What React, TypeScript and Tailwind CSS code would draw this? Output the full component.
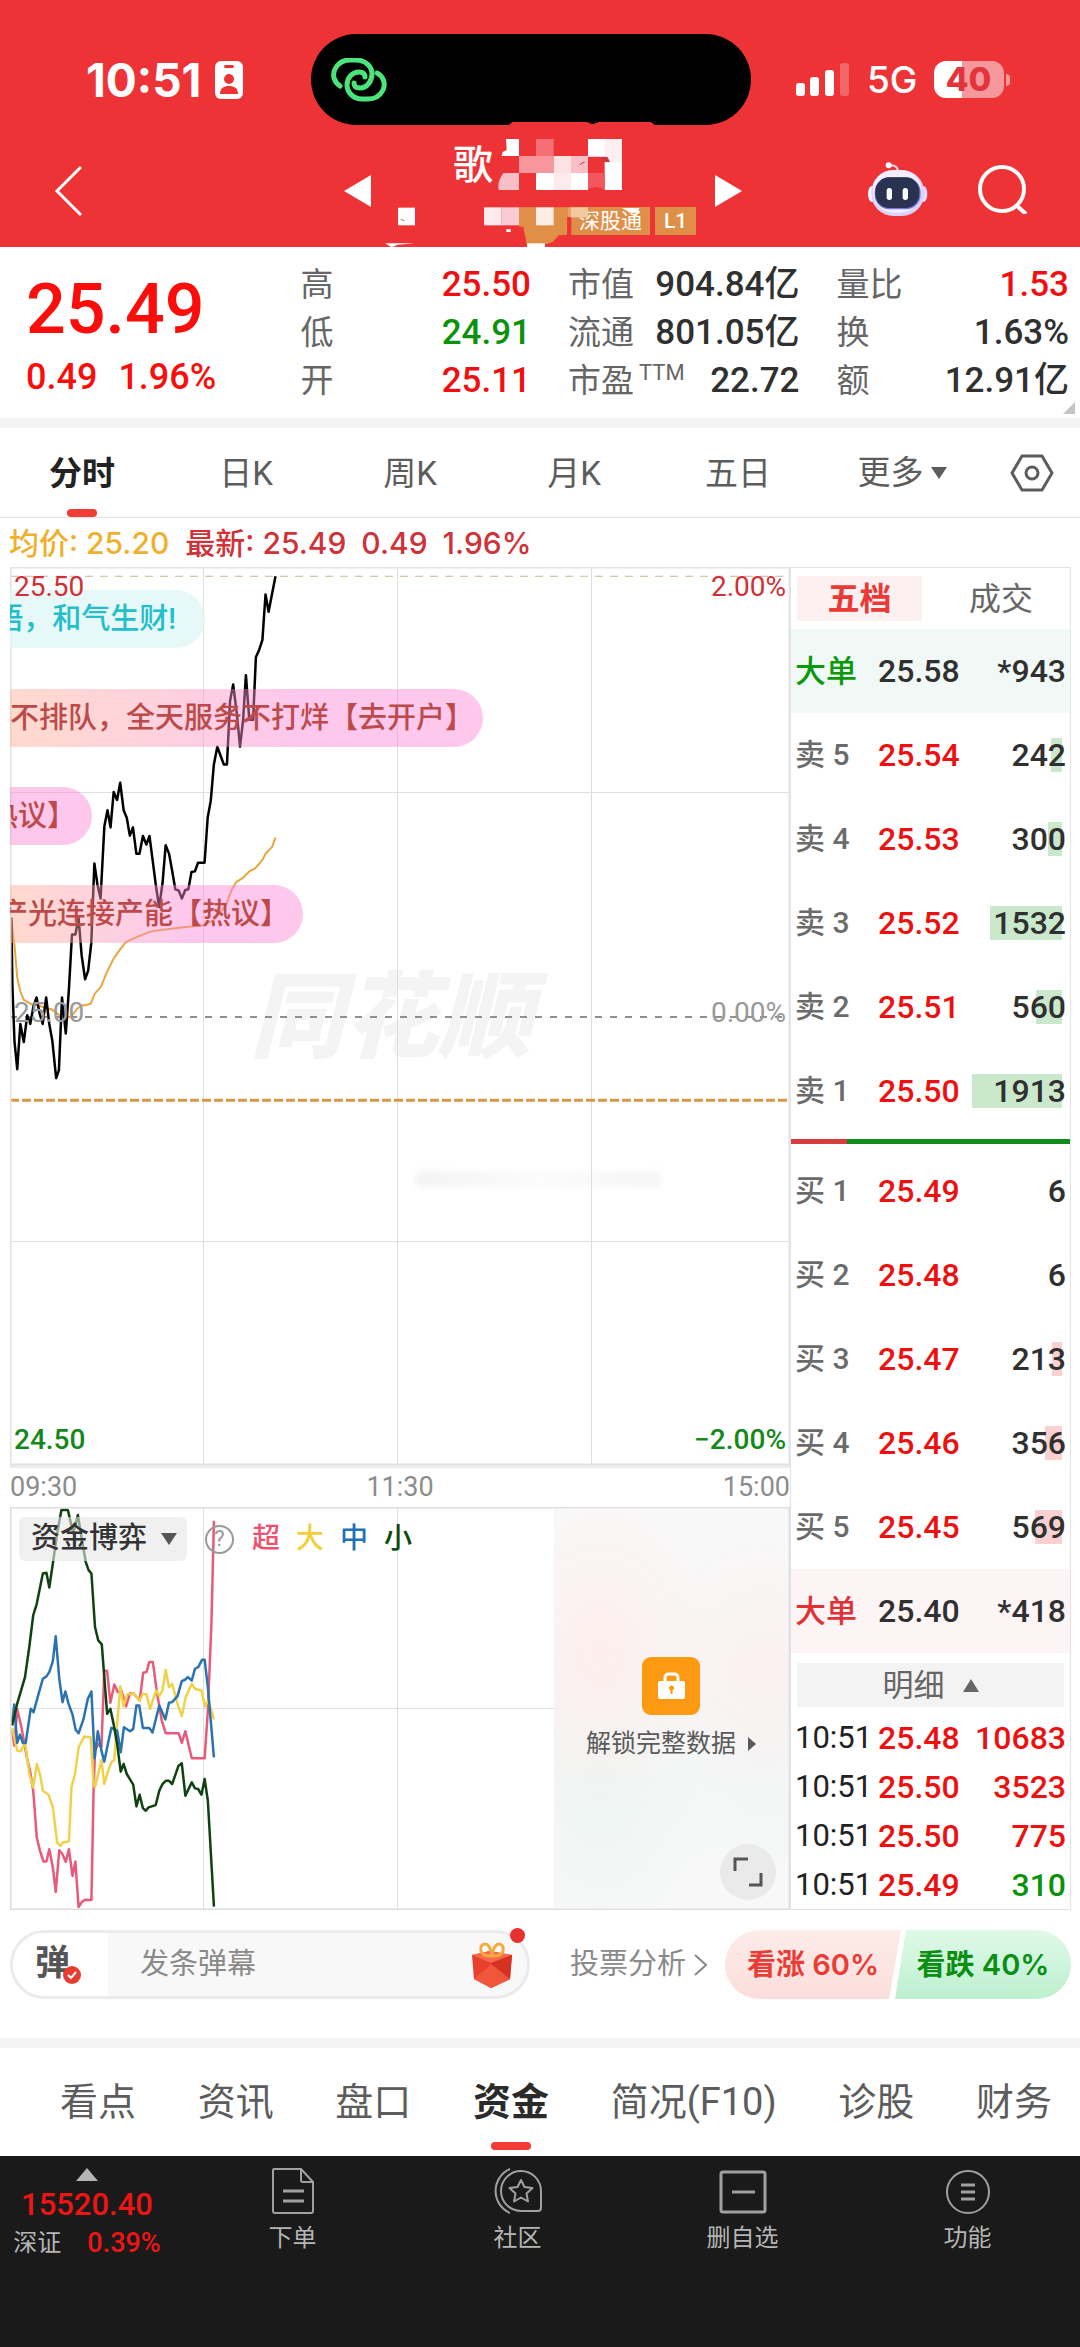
import { useState } from 'react';
import clsx from 'clsx';

interface Stat {
  label: string;
  note?: string;
  value: string;
  color?: string;
}

interface Level {
  label: string;
  price: string;
  volume: number;
}

const RED = 'text-[#ee1010]';
const GREEN = 'text-[#0a930a]';

const STATS: Stat[][] = [
  [
    { label: '高', value: '25.50', color: RED },
    { label: '低', value: '24.91', color: GREEN },
    { label: '开', value: '25.11', color: RED }
  ],
  [
    { label: '市值', value: '904.84亿' },
    { label: '流通', value: '801.05亿' },
    { label: '市盈', note: 'TTM', value: '22.72' }
  ],
  [
    { label: '量比', value: '1.53', color: RED },
    { label: '换', value: '1.63%' },
    { label: '额', value: '12.91亿' }
  ]
];

const PERIODS = ['分时', '日K', '周K', '月K', '五日'];

const ASKS: Level[] = [
  { label: '卖 5', price: '25.54', volume: 242 },
  { label: '卖 4', price: '25.53', volume: 300 },
  { label: '卖 3', price: '25.52', volume: 1532 },
  { label: '卖 2', price: '25.51', volume: 560 },
  { label: '卖 1', price: '25.50', volume: 1913 }
];

const BIDS: Level[] = [
  { label: '买 1', price: '25.49', volume: 6 },
  { label: '买 2', price: '25.48', volume: 6 },
  { label: '买 3', price: '25.47', volume: 213 },
  { label: '买 4', price: '25.46', volume: 356 },
  { label: '买 5', price: '25.45', volume: 569 }
];

const TICKS = [
  { time: '10:51', price: '25.48', volume: '10683', color: RED },
  { time: '10:51', price: '25.50', volume: '3523', color: RED },
  { time: '10:51', price: '25.50', volume: '775', color: RED },
  { time: '10:51', price: '25.49', volume: '310', color: GREEN }
];

const SECTIONS = ['看点', '资讯', '盘口', '资金', '简况(F10)', '诊股', '财务'];

const PRICE_LINE =
  '33,1040 36,1240 42,1400 50,1482 59,1350 69,1403 79,1325 88,1350 97,1300 106,1273 115,1320 124,1350 134,1273 143,1350 152,1400 163,1508 171,1485 180,1273 191,1378 200,1250 209,1090 219,1090 228,1040 237,1150 247,1220 256,1195 265,1115 274,883 283,945 292,985 303,775 312,728 321,778 330,675 340,698 349,648 359,728 368,750 377,802 386,778 396,855 405,855 415,803 425,828 434,803 444,880 453,950 462,1010 472,940 481,830 491,855 500,905 509,958 519,962 528,985 538,960 547,958 556,908 566,906 575,881 594,881 603,750 612,700 621,595 631,543 640,568 650,595 659,595 668,410 677,362 687,440 697,543 706,465 714,335 724,465 735,465 743,283 753,260 762,232 771,100 780,150 790,98 800,47';

const AVERAGE_LINE =
  '33,1050 42,1120 50,1215 59,1255 69,1280 90,1292 115,1298 150,1308 180,1330 205,1330 225,1305 237,1297 263,1292 275,1262 293,1242 310,1200 330,1160 345,1138 365,1112 400,1096 440,1080 520,1070 590,1063 620,1048 640,1025 658,1000 670,965 685,938 705,925 725,905 740,898 762,873 771,855 790,835 800,808';

const FUND_LINES = [
  {
    name: '超',
    stroke: '#e8597a',
    text: 'text-[#f0506e]',
    points:
      '34,720 40,765 48,655 60,710 75,800 84,840 93,900 103,1040 112,1080 122,1112 130,1112 138,1075 148,1130 156,1203 166,1078 175,1090 184,1113 193,1075 203,1155 211,1112 220,1248 230,1232 240,1226 256,1227 262,900 266,780 275,760 284,770 292,540 300,542 309,637 320,582 330,605 340,600 353,648 364,608 373,608 391,630 401,547 410,545 418,515 428,515 440,610 453,690 464,728 500,728 509,757 519,722 537,803 573,803 582,660 592,400 599,92'
  },
  {
    name: '大',
    stroke: '#f0d24a',
    text: 'text-[#f2cf3c]',
    points:
      '34,712 48,780 58,782 70,755 82,850 93,890 103,820 112,850 120,900 136,912 148,950 160,1055 170,1065 175,1055 193,1052 200,890 210,850 220,770 236,738 254,740 262,880 266,890 284,808 292,880 303,840 312,815 320,808 328,700 337,587 346,648 356,612 373,608 391,630 400,610 410,612 420,655 437,600 446,617 455,600 464,538 473,590 482,580 497,640 509,677 520,620 537,580 546,595 564,600 574,648 582,630 592,660 599,687'
  },
  {
    name: '中',
    stroke: '#2a72b0',
    text: 'text-[#1f72ba]',
    points:
      '34,695 40,642 48,757 56,732 64,757 72,757 86,655 94,665 108,610 120,565 130,558 138,545 148,512 156,438 166,565 175,635 183,603 192,640 203,672 212,718 220,728 234,685 246,625 256,603 265,803 274,722 284,780 292,813 303,755 312,712 328,720 338,785 347,710 364,722 373,715 382,645 390,645 400,712 418,712 427,726 446,645 463,687 473,637 482,635 497,617 509,572 518,568 526,560 537,570 546,535 555,530 566,508 573,508 582,590 599,800'
  },
  {
    name: '小',
    stroke: '#0f4210',
    text: 'text-[#0c4a0e]',
    points:
      '34,705 48,640 70,560 82,470 93,375 103,340 120,250 130,248 138,292 148,220 160,130 172,60 190,60 205,130 218,75 228,140 240,215 248,240 256,250 266,410 275,450 285,462 292,560 300,670 309,655 318,700 328,760 338,843 346,820 355,850 373,882 382,947 391,912 400,952 408,960 416,950 436,943 446,900 455,880 465,870 473,870 482,880 500,825 509,818 519,915 537,875 546,893 555,895 564,912 573,865 582,930 599,1247'
  }
];

function StatusBar() {
  return (
    <div className="grid grid-cols-[1fr_440px_329px] items-center pt-[34px] font-['Inter','Noto_Sans_CJK_SC',sans-serif]">
      <div className="flex items-center gap-[14px] pl-[86px]">
        <span className="text-[46px] leading-none font-bold">10:51</span>
        <svg viewBox="0 0 28 38" className="h-[38px] w-[28px]" fill="none">
          <rect width="28" height="38" rx="6" fill="#fff" />
          <rect x="9" y="4" width="10" height="3" rx="1.5" fill="#ee3337" />
          <circle cx="14" cy="18" r="5" fill="#ee3337" />
          <path d="M5 33c0-6 4-8 9-8s9 2 9 8z" fill="#ee3337" />
        </svg>
      </div>
      <div className="flex h-[91px] items-center rounded-full bg-black pl-[20px]">
        {/* two interlocked links */}
        <svg viewBox="0 0 56 44" className="h-[44px] w-[56px]" fill="none" stroke="#4be37b" strokeWidth="5" strokeLinecap="round">
          <path d="M9 28C3 24 1 17 4 11 7 5 13 2 19 2h6c10 0 16 7 16 14s-5 14-12 14c-4 0-6-2-6-5" />
          <path d="M46 15c6 3 9 10 6 17-3 6-8 9-15 9h-6c-9 0-15-7-15-14s5-13 12-13c4 0 6 2 6 5" />
        </svg>
      </div>
      <div className="flex items-center pl-[45px]">
        <svg viewBox="0 0 54 34" className="h-[34px] w-[54px]" fill="#fff">
          <rect y="20" width="9" height="13" rx="3" />
          <rect x="14" y="14" width="9" height="19" rx="3" />
          <rect x="29" y="7" width="9" height="26" rx="3" />
          <rect x="44" width="9" height="33" rx="3" fillOpacity=".25" />
        </svg>
        <span className="ml-[17px] text-[37px] leading-none font-medium">5G</span>
        <div className="ml-[16px] flex h-[37px] w-[70px] items-center justify-center rounded-[12px] bg-linear-to-r from-white from-40% to-[#f5979b] to-40% text-[33px] leading-none font-extrabold text-[#e2343a]">
          40
        </div>
        <div className="ml-[2px] h-[12px] w-[4px] rounded-r-full bg-[#f5979b]" />
      </div>
    </div>
  );
}

// Blocks that hide most of the stock name and code
function NameMask() {
  return (
    <svg viewBox="0 60 1080 381" className="absolute -top-[5px] -left-px h-[127px] w-[360px]">
      <path d="M415 76 428 66H650l18 7 18-7H842l14 10z" fill="#ee3337" />
      <path d="M408 117h39v51h-52l3-12 12-6z" fill="#fff" />
      <rect x="498" y="117" width="53" height="51" fill="#f56f74" />
      <path d="M654 117h102v153h-52v-84l-14-16h-36z" fill="#fff" />
      <rect x="704" y="117" width="52" height="70" fill="#fdeef0" />
      <rect x="447" y="168" width="104" height="51" fill="#f7979d" />
      <rect x="551" y="168" width="52" height="51" fill="#fde2e5" />
      <rect x="603" y="168" width="51" height="51" fill="#fabfc4" />
      <path d="M630 195q4-8 14-8" stroke="#c9383d" strokeWidth="3" fill="none" />
      <path d="M690 170h22l8 16h-22z" fill="#c9383d" />
      <path d="M400 219h47v51h-60q-8-20 13-51z" fill="#fabfc6" />
      <rect x="498" y="219" width="156" height="51" fill="#fff" />
      <rect x="551" y="219" width="52" height="51" fill="#fdeaed" />
      <path d="M654 219h50v51l-26-10-24 8z" fill="#f3565d" />
      <rect x="84" y="323" width="51" height="53" fill="#fff" />
      <path d="M92 358l12 4" stroke="#555" strokeWidth="2" />
      <rect x="342" y="322" width="52" height="54" fill="#fdeaee" />
      <rect x="394" y="322" width="53" height="54" fill="#fbcbd3" />
      <path d="M447 322h145v82l-26 2-18 20-18 6h-60l-10-52h-13z" fill="#e08f48" />
      <rect x="498" y="322" width="53" height="54" fill="#fdece3" />
      <path d="M592 350h12v54h-12z" fill="#ee3337" />
      <path d="M592 322h62v30h-50l-12-2z" fill="#e6a468" />
      <path d="M603 322h51v30h-51z" fill="#f5c9a0" />
      <path d="M756 324h52l-4 14h-24z" fill="#fff" />
      <path d="M408 388h14v8h-12z" fill="#fff" />
      <path d="M46 430h88l-50 4-20 8z" fill="#fff" />
      <rect x="471" y="430" width="54" height="11" fill="#fff" />
    </svg>
  );
}

function RobotIcon() {
  return (
    <svg viewBox="0 0 180 165" className="h-[55px] w-[60px]">
      <path d="M62 10q30-4 28 26" stroke="#fbe4ee" strokeWidth="6" fill="none" />
      <circle cx="62" cy="10" r="9" fill="#fff" />
      <ellipse cx="12" cy="96" rx="12" ry="24" fill="#f6f0ff" />
      <ellipse cx="166" cy="96" rx="12" ry="24" fill="#e6dcff" />
      <rect x="10" y="24" width="158" height="138" rx="66" fill="#d9d2fb" />
      <rect x="14" y="24" width="146" height="128" rx="62" fill="#f2eeff" />
      <rect x="20" y="46" width="138" height="96" rx="44" fill="#7478d6" />
      <rect x="22" y="46" width="132" height="92" rx="42" fill="#2a3251" />
      <rect x="56" y="78" width="16" height="36" rx="8" fill="#fff" />
      <rect x="104" y="78" width="16" height="36" rx="8" fill="#fff" />
    </svg>
  );
}

function Header() {
  return (
    <header className="bg-[#ee3337] text-white">
      <StatusBar />
      <div className="grid h-[122px] grid-cols-[1fr_398px_338px]">
        <button aria-label="返回" className="flex items-center justify-start pt-[10px] pl-[54px]">
          <svg viewBox="0 0 28 50" className="h-[50px] w-[28px]" fill="none" stroke="#fff" strokeWidth="3">
            <path d="M27 1 3 25 27 49" />
          </svg>
        </button>
        <div className="flex">
          <button aria-label="上一只" className="pt-[9px]">
            <svg viewBox="0 0 27 32" className="h-[32px] w-[27px]" fill="#fff">
              <path d="M27 0v32L0 16z" />
            </svg>
          </button>
          <div className="relative flex-1 pt-[11px]">
            <h1 className="pl-[82px] text-[40px] leading-[60px] font-medium">歌</h1>
            <div className="mt-[11px] flex gap-[5px] pl-[200px] text-[21px] leading-[28px]">
              <span className="bg-[#e08f48] px-[8px]">深股通</span>
              <span className="bg-[#e08f48] px-[9px] font-medium">L1</span>
            </div>
            <NameMask />
          </div>
          <button aria-label="下一只" className="pt-[9px]">
            <svg viewBox="0 0 27 32" className="h-[32px] w-[27px]" fill="#fff">
              <path d="M0 0v32l27-16z" />
            </svg>
          </button>
        </div>
        <div className="flex items-center justify-end gap-[50px] pt-[6px] pr-[52px]">
          <button aria-label="智能助手">
            <RobotIcon />
          </button>
          <button aria-label="搜索">
            <svg viewBox="0 0 50 50" className="h-[50px] w-[50px]" fill="none" stroke="#fff" strokeWidth="4">
              <circle cx="24" cy="25" r="22" />
              <path d="m38 41 10 9" />
            </svg>
          </button>
        </div>
      </div>
    </header>
  );
}

function Quote() {
  return (
    <section className="relative grid grid-cols-[237fr_230fr_231fr_232fr] gap-[37px] border-b-[10px] border-[#f3f3f3] pt-[14px] pr-[11px] pb-[13px] pl-[26px]">
      <div className="text-[#fa0d0a]">
        <div className="pt-[6px] text-[70px] leading-[84px] font-medium">25.49</div>
        <div className="flex gap-[21px] pt-[2px] text-[36px] leading-[48px] font-medium">
          <span>0.49</span>
          <span>1.96%</span>
        </div>
      </div>
      {STATS.map((group) => (
        <dl key={group[0].label}>
          {group.map(({ label, note, value, color }) => (
            <div key={label} className="flex h-[48px] items-center justify-between whitespace-nowrap">
              <dt className="flex text-[33px] text-[#666]">
                {label}
                {note && <span className="pl-[5px] text-[22px]">{note}</span>}
              </dt>
              <dd className={clsx('text-[35px] font-medium', color ?? 'text-[#303030]')}>{value}</dd>
            </div>
          ))}
        </dl>
      ))}
      <svg viewBox="0 0 12 12" className="absolute right-[5px] bottom-[4px] h-[12px] w-[12px]" fill="#c4c4c4">
        <path d="M12 0v12H0z" />
      </svg>
    </section>
  );
}

function PeriodTabs() {
  const [active, setActive] = useState('分时');

  return (
    <nav className="grid h-[90px] grid-cols-[repeat(6,164fr)_96fr] border-b border-[#e4e5e7] text-[33px] text-[#5c5c5c]">
      {PERIODS.map((period) => (
        <button
          key={period}
          onClick={() => setActive(period)}
          className={clsx('flex flex-col items-center justify-between', period === active && 'font-bold text-[#222]')}
        >
          <span className="pt-[21px]">{period}</span>
          {period === active && <span className="h-[8px] w-[30px] rounded-full bg-[#f23c35]" />}
        </button>
      ))}
      <button aria-haspopup="menu" className="flex items-center justify-center gap-[7px]">
        更多
        <svg viewBox="0 0 16 12" className="h-[12px] w-[16px]" fill="#5c5c5c">
          <path d="M0 0h16L8 12z" />
        </svg>
      </button>
      <button aria-label="图表设置" className="flex items-center justify-center">
        <svg viewBox="0 0 44 40" className="h-[40px] w-[44px]" fill="none" stroke="#5c5c5c" strokeWidth="3">
          <path d="M12 3h20l10 17-10 17H12L2 20z" strokeLinejoin="round" />
          <circle cx="22" cy="20" r="6" />
        </svg>
      </button>
    </nav>
  );
}

function PriceChart() {
  return (
    <div className="relative h-[901px] overflow-hidden border-b-[3px] border-[#ebebed] text-[28px] leading-none">
      <div className="absolute top-[404px] left-[240px] text-[94px] font-black text-[#f4f4f4] italic">同花顺</div>
      <div className="absolute top-[604px] left-[406px] h-[16px] w-[244px] bg-linear-to-r from-[#f3f3f3] via-[#fcfcfc] to-[#f5f5f5] blur-[3px]" />
      <svg
        viewBox="29 20 2265 2614"
        preserveAspectRatio="none"
        className="absolute inset-0 h-full w-full [&_*]:[vector-effect:non-scaling-stroke]"
        fill="none"
      >
        <path
          d="M590 20V2634M1154 20V2634M1719 20V2634M29 675H2294M29 1984H2294"
          stroke="#dedee2"
          strokeWidth="1"
          shapeRendering="crispEdges"
        />
        <path d="M29 47H2294" stroke="#c9b78a" strokeWidth="1" strokeDasharray="8 7" />
        <path d="M29 1330H2294" stroke="#8f8f8f" strokeWidth="2" strokeDasharray="7 8" />
        <path d="M29 1572H2294" stroke="#d99748" strokeWidth="3" strokeDasharray="9 3" />
        <polyline points={AVERAGE_LINE} stroke="#e8a63c" strokeWidth="2" />
        <polyline points={PRICE_LINE} stroke="#000" strokeWidth="2.5" strokeLinejoin="round" />
        <path d="M29 20H2294V2634H29z" stroke="#e3e3e6" strokeWidth="3" />
      </svg>

      <div className="absolute top-[23px] left-0 flex h-[58px] w-[195px] items-center justify-end rounded-r-full bg-[#dff6f6]/75 pr-[29px] text-[29px] font-medium whitespace-nowrap text-[#22bfca]">
        语，和气生财!
      </div>
      <div className="absolute top-[122px] left-0 flex h-[58px] w-[473px] items-center rounded-r-full bg-linear-to-r from-[#ffad90]/45 to-[#fb85d5]/45 to-60% text-[29px] font-medium whitespace-nowrap text-[#bd4a4a]">
        不排队，全天服务不打烊【去开户】
      </div>
      <div className="absolute top-[220px] left-0 flex h-[58px] w-[82px] items-center justify-end overflow-hidden rounded-r-full bg-[#fb85d5]/45 pr-[16px] text-[29px] font-medium whitespace-nowrap text-[#bd4a4a]">
        热议】
      </div>
      <div className="absolute top-[318px] left-0 flex h-[58px] w-[293px] items-center justify-end overflow-hidden rounded-r-full bg-linear-to-r from-[#ffad90]/45 to-[#fb85d5]/45 to-60% pr-[14px] text-[29px] font-medium whitespace-nowrap text-[#bd4a4a]">
        产光连接产能【热议】
      </div>

      <span className="absolute top-[6px] left-[4px] text-[#d03038]">25.50</span>
      <span className="absolute top-[6px] right-[4px] text-[#d03038]">2.00%</span>
      <span className="absolute top-[432px] left-[4px] text-[#999]">25.00</span>
      <span className="absolute top-[432px] right-[4px] text-[#999]">0.00%</span>
      <span className="absolute bottom-[11px] left-[4px] font-medium text-[#14881a]">24.50</span>
      <span className="absolute right-[4px] bottom-[11px] font-medium text-[#14881a]">−2.00%</span>
    </div>
  );
}

function FundChart() {
  return (
    <div className="relative flex-1">
      <svg
        viewBox="28 51 2184 1206"
        preserveAspectRatio="none"
        className="absolute inset-0 h-full w-full [&_*]:[vector-effect:non-scaling-stroke]"
        fill="none"
      >
        <path d="M569 51V1257M1112 51V1257M28 654H2212" stroke="#dedee2" strokeWidth="1" shapeRendering="crispEdges" />
        {FUND_LINES.map((line) => (
          <polyline key={line.name} points={line.points} stroke={line.stroke} strokeWidth="2.5" strokeLinejoin="round" />
        ))}
        <path d="M28 51H2212V1257H28z" stroke="#dedee2" strokeWidth="3" />
      </svg>

      <div className="relative flex items-center pt-[10px] pl-[9px] text-[29px]">
        <label className="relative flex items-center">
          <span className="sr-only">指标</span>
          <select className="h-[44px] w-[168px] appearance-none rounded-[6px] bg-[#e6e6e6]/60 pl-[12px] font-medium text-[#333]">
            <option>资金博弈</option>
          </select>
          <svg viewBox="0 0 16 12" className="pointer-events-none absolute right-[10px] h-[12px] w-[16px]" fill="#555">
            <path d="M0 0h16L8 12z" />
          </svg>
        </label>
        <button
          aria-label="说明"
          className="ml-[18px] flex h-[29px] w-[29px] items-center justify-center rounded-full border-2 border-[#999] text-[22px] leading-none text-[#999]"
        >
          ?
        </button>
        <div className="flex gap-[16px] pl-[18px] text-[28px] leading-[44px] font-medium">
          {FUND_LINES.map((line) => (
            <span key={line.name} className={line.text}>
              {line.name}
            </span>
          ))}
        </div>
      </div>

      <div className="absolute inset-y-[2px] right-[2px] flex w-[234px] flex-col items-center bg-[#f8f8f8] bg-[radial-gradient(ellipse_at_20%_36%,#fdeeed_0%,transparent_45%),radial-gradient(ellipse_at_90%_40%,#fbf0f0_0%,transparent_40%),radial-gradient(ellipse_at_20%_68%,#edf5f3_0%,transparent_45%),radial-gradient(ellipse_at_90%_62%,#f1f6f5_0%,transparent_40%)] pt-[148px]">
        <svg viewBox="0 0 58 58" className="h-[58px] w-[58px]">
          <rect width="58" height="58" rx="9" fill="#fd9a12" />
          <path d="M23 25v-4q0-4 4-4h5q4 0 4 4v4" stroke="#fff" strokeWidth="3" fill="none" />
          <rect x="16" y="24" width="27" height="18" rx="2" fill="#fff" />
          <circle cx="29.500" cy="31" r="2.500" fill="#fd9a12" />
          <path d="M28.500 31h2v6h-2z" fill="#fd9a12" />
        </svg>
        <button className="flex items-center gap-[12px] pt-[10px] text-[25px] whitespace-nowrap text-[#5a5a5a]">
          解锁完整数据
          <svg viewBox="0 0 8 14" className="h-[14px] w-[8px]" fill="#5a5a5a">
            <path d="M0 0 8 7 0 14z" />
          </svg>
        </button>
        <button
          aria-label="全屏"
          className="absolute right-[12px] bottom-[8px] flex h-[56px] w-[56px] items-center justify-center rounded-full bg-[#eaeaea]"
        >
          <svg viewBox="0 0 30 30" className="h-[30px] w-[30px]" fill="none" stroke="#555" strokeWidth="3">
            <path d="M2 14V2h13M16 28h12V16" />
          </svg>
        </button>
      </div>
    </div>
  );
}

function LevelTable({ levels, barClass }: { levels: Level[]; barClass: string }) {
  return (
    <table className="w-full table-fixed">
      <tbody>
        {levels.map(({ label, price, volume }) => (
          <tr key={label} className="h-[84px]">
            <th className="w-[87px] pl-[4px] text-left text-[30px] font-medium whitespace-nowrap text-[#6b6b6b]">{label}</th>
            <td className="w-[90px] text-[#ee1010]">{price}</td>
            <td className="relative pr-[4px] text-right text-[#303030]">
              <span
                className={clsx('absolute top-[25px] right-[8px] h-[34px]', barClass)}
                style={{ width: volume < 50 ? 0 : (volume / 1913) * 90 }}
              />
              <span className="relative">{volume}</span>
            </td>
          </tr>
        ))}
      </tbody>
    </table>
  );
}

function BigOrder({ price, volume, tone }: { price: string; volume: string; tone: string }) {
  return (
    <div className={clsx('flex h-[84px] items-center pr-[4px] pl-[4px]', tone)}>
      <span className="w-[83px] text-[31px]">大单</span>
      <span className="text-[#303030]">{price}</span>
      <span className="ml-auto text-[#303030]">*{volume}</span>
    </div>
  );
}

function OrderBook() {
  return (
    <aside className="border border-[#e3e3e6] text-[32px] leading-none font-medium">
      <div className="flex h-[61px] items-center pl-[6px]">
        <button className="h-[45px] w-[125px] bg-[#fdf0f0] font-bold text-[#ea3a36]">五档</button>
        <button className="flex-1 pl-[10px] font-normal text-[#666]">成交</button>
      </div>
      <BigOrder price="25.58" volume="943" tone="bg-[#f1f9f6] text-[#0a990a]" />
      <LevelTable levels={ASKS} barClass="bg-[#c9e8cc]" />
      <div className="flex h-[16px] items-center">
        <div className="h-[5px] w-[20%] bg-[#d63b3e]" />
        <div className="h-[5px] flex-1 bg-[#128c1c]" />
      </div>
      <LevelTable levels={BIDS} barClass="bg-[#fbd0d0]" />
      <BigOrder price="25.40" volume="418" tone="bg-[#fdf4f5] text-[#e03236]" />
      <div className="px-[6px] pt-[10px] pb-[6px]">
        <button className="flex h-[44px] w-full items-center justify-center gap-[18px] bg-[#f3f3f4] text-[31px] font-normal text-[#666]">
          明细
          <svg viewBox="0 0 16 13" className="h-[13px] w-[16px]" fill="#666">
            <path d="M0 13h16L8 0z" />
          </svg>
        </button>
      </div>
      <table className="w-full table-fixed">
        <tbody>
          {TICKS.map(({ time, price, volume, color }, i) => (
            <tr key={i} className="h-[49px]">
              <td className="w-[87px] pl-[4px] text-[31px] font-normal text-[#222]">{time}</td>
              <td className="w-[90px] text-[#ee1010]">{price}</td>
              <td className={clsx('pr-[4px] text-right', color)}>{volume}</td>
            </tr>
          ))}
        </tbody>
      </table>
    </aside>
  );
}

function GiftIcon() {
  return (
    <svg viewBox="0 0 44 46" className="h-[46px] w-[44px]">
      <path d="M2 13 20 9l22 4-2 24-19 9L4 37z" fill="#e8402c" />
      <path d="M2 13 20 9l22 4-21 8z" fill="#f8684a" />
      <path d="M21 21 42 13l-2 24-19 9z" fill="#d63222" />
      <path d="m4 37 17-15 19 15-19 9z" fill="#f0563c" />
      <path d="M20 14C8 14 9 2 15 2c4 0 6 6 7 11 1-5 3-11 7-11 6 0 7 12-5 12z" fill="none" stroke="#f6a93f" strokeWidth="3" />
    </svg>
  );
}

function CommentBar() {
  return (
    <section className="flex items-center border-b-[10px] border-[#f3f3f3] pt-[20px] pr-[9px] pb-[39px] pl-[10px]">
      <div className="relative flex h-[69px] min-w-0 flex-1 items-center rounded-full border-[3px] border-[#ebebeb] bg-[#f8f8f8]">
        <button className="relative flex h-full w-[95px] shrink-0 items-center rounded-l-full bg-white pl-[22px] text-[35px] font-bold text-[#555]">
          弹
          <svg viewBox="0 0 18 18" className="absolute right-[27px] bottom-[12px] h-[18px] w-[18px]">
            <circle cx="9" cy="9" r="9" fill="#ea3d32" />
            <path d="m5 9 3 3 5-6" stroke="#fff" strokeWidth="2" fill="none" />
          </svg>
        </button>
        <input
          aria-label="发条弹幕"
          placeholder="发条弹幕"
          className="min-w-0 flex-1 bg-transparent pl-[32px] text-[29px] outline-none placeholder:text-[#8a8a8a]"
        />
        <button aria-label="礼物" className="shrink-0 pr-[13px]">
          <GiftIcon />
        </button>
        <span className="absolute -top-[5px] right-[2px] h-[15px] w-[15px] rounded-full bg-[#e8302e]" />
      </div>
      <a href="#vote" className="flex shrink-0 items-center gap-[8px] pl-[40px] text-[29px] whitespace-nowrap text-[#8a8a8a]">
        投票分析
        <svg viewBox="0 0 13 22" className="h-[22px] w-[13px]" fill="none" stroke="#8a8a8a" strokeWidth="2">
          <path d="m1 1 11 10L1 21" />
        </svg>
      </a>
      <div className="flex shrink-0 pl-[18px] font-['Inter','Noto_Sans_CJK_SC',sans-serif] text-[29px] font-semibold">
        <button className="h-[69px] w-[176px] rounded-l-full bg-linear-to-b from-[#fdecea] to-[#fbdedb] text-[#ea3b35] [clip-path:polygon(0_0,100%_0,calc(100%-12px)_100%,0_100%)]">
          看涨 60%
        </button>
        <button className="-ml-[6px] h-[69px] w-[176px] rounded-r-full bg-linear-to-b from-[#e0f9e8] to-[#bdf0cf] text-[#0a8f14] [clip-path:polygon(11px_0,100%_0,100%_100%,0_100%)]">
          看跌 40%
        </button>
      </div>
    </section>
  );
}

function SectionTabs() {
  const [active, setActive] = useState('资金');

  return (
    <nav className="flex h-[108px] justify-between pr-[28px] pb-[6px] pl-[60px] text-[38px] text-[#5c5c5c]">
      {SECTIONS.map((section) => (
        <button
          key={section}
          onClick={() => setActive(section)}
          className={clsx('flex flex-col items-center justify-between', section === active && 'font-bold text-[#2b2b2b]')}
        >
          <span className="pt-[26px]">{section}</span>
          {section === active && <span className="h-[8px] w-[40px] shrink-0 rounded-full bg-[#f23c35]" />}
        </button>
      ))}
    </nav>
  );
}

function BottomBar() {
  return (
    <footer className="grid h-[191px] grid-cols-[180fr_repeat(4,225fr)] bg-[#1a1a1a] pt-[10px] text-[24px] text-[#b5b5b5]">
      <button className="flex flex-col items-center self-start pr-[6px] font-medium whitespace-nowrap text-[#ee1515]">
        <svg viewBox="0 0 22 13" className="mt-[2px] h-[13px] w-[22px]" fill="#b5b5b5">
          <path d="M0 13h22L11 0z" />
        </svg>
        <span className="pt-[4px] text-[31px] leading-[40px]">15520.40</span>
        <span className="flex items-center gap-[26px] text-[27px] leading-[36px]">
          <span className="text-[24px] font-normal text-[#b5b5b5]">深证</span>
          0.39%
        </span>
      </button>
      <button className="flex flex-col items-center gap-[4px] self-start">
        <svg viewBox="0 0 44 50" className="h-[50px] w-[44px]" fill="none" stroke="#a0a0a0" strokeWidth="2">
          <path d="M2 4q0-1 1-1h27l12 13v29q0 2-2 2H4q-2 0-2-2zM30 3v11q0 2 2 2h10" />
          <path d="M12 25h21M12 35h21" strokeWidth="3" />
        </svg>
        下单
      </button>
      <button className="flex flex-col items-center gap-[4px] self-start">
        <svg viewBox="0 0 50 50" className="h-[50px] w-[50px]" fill="none" stroke="#a0a0a0" strokeWidth="2">
          <path d="M28 5a20 20 0 0 1 20 20v17q0 3-3 3H28a20 20 0 0 1 0-40z" />
          <path d="M17 3a24 24 0 0 0 0 44" />
          <path d="m28 14 3.500 7 8 1-6 5.500 1.500 8-7-4-7 4 1.500-8-6-5.500 8-1z" strokeLinejoin="round" />
        </svg>
        社区
      </button>
      <button className="flex flex-col items-center gap-[4px] self-start">
        <svg viewBox="0 0 50 50" className="h-[50px] w-[50px]" fill="none" stroke="#a0a0a0" strokeWidth="3">
          <rect x="3" y="6" width="44" height="40" rx="2" />
          <path d="M14 26h23" />
        </svg>
        删自选
      </button>
      <button className="flex flex-col items-center gap-[4px] self-start">
        <svg viewBox="0 0 50 50" className="h-[50px] w-[50px]" fill="none" stroke="#a0a0a0" strokeWidth="2">
          <circle cx="25" cy="26" r="21" />
          <path d="M18 19h14M18 26h14M18 33h14" strokeWidth="3" />
        </svg>
        功能
      </button>
    </footer>
  );
}

export default function App() {
  return (
    <div className="bg-white font-['Roboto','Noto_Sans_CJK_SC',sans-serif]">
      <Header />
      <Quote />
      <PeriodTabs />
      <div className="flex h-[49px] items-center gap-[16px] pt-[2px] pl-[9px] font-['Inter','Noto_Sans_CJK_SC',sans-serif] text-[30px] font-medium">
        <span className="text-[#efb02c]">均价: 25.20</span>
        <span className="text-[#cf3238]">最新: 25.49&ensp;0.49&ensp;1.96%</span>
      </div>
      <main className="mr-[9px] ml-[10px] grid grid-cols-[780fr_281fr]">
        <div className="flex flex-col">
          <PriceChart />
          <div className="flex h-[39px] items-center justify-between text-[27px] text-[#8c8c8c]">
            <span>09:30</span>
            <span>11:30</span>
            <span>15:00</span>
          </div>
          <FundChart />
        </div>
        <OrderBook />
      </main>
      <CommentBar />
      <SectionTabs />
      <BottomBar />
    </div>
  );
}
